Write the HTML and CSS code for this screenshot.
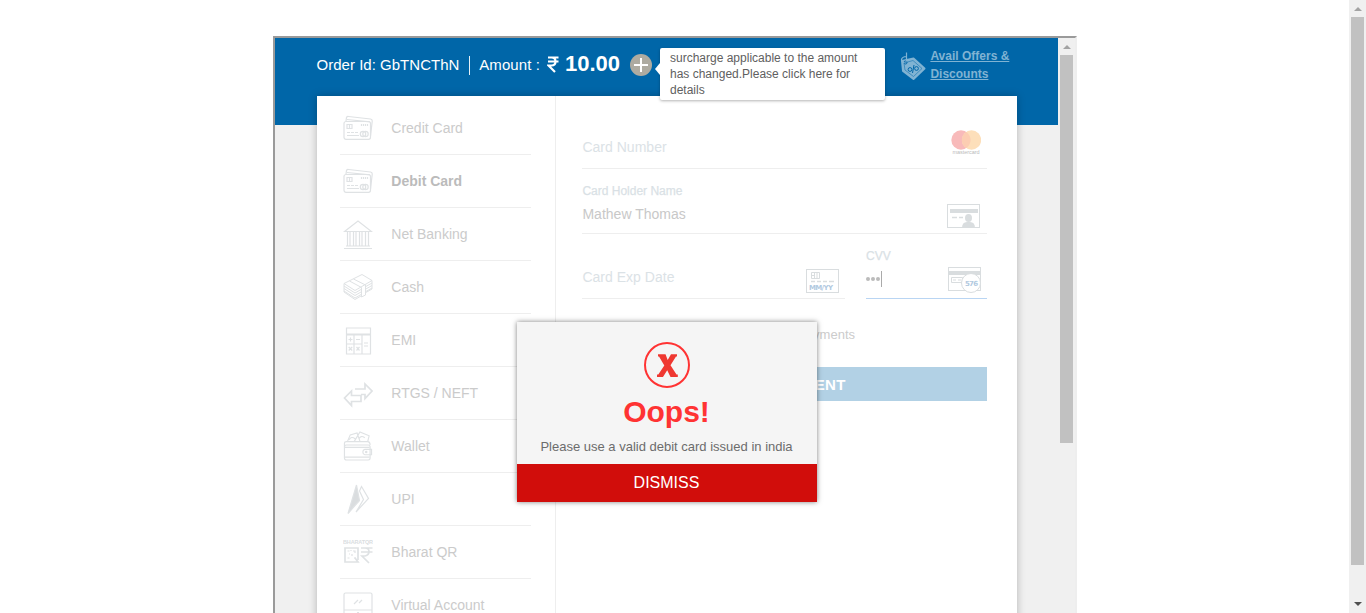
FILE: index.html
```
<!DOCTYPE html>
<html lang="en">
<head>
<meta charset="utf-8">
<title>Payment</title>
<link rel="stylesheet" href="styles.css">
</head>
<body>
<svg class="defs" width="0" height="0">
  <symbol id="cards" viewBox="0 0 30 26">
    <path d="M3 6 L3.500 2.500Q4 1.300 5.500 1.500L27.500 4 Q29.500 4.400 29.200 6.500L27.500 21M4 4.500l23 2.300"/>
    <rect x="1" y="6.500" width="26.500" height="17.800" rx="2"/>
    <path d="M4 9.500h5v4H4zM6.500 10v3M18.500 9v2M20.500 9v2M22.500 9v2M24.500 9v2M4 17.500h3M8 17.500h3M12 17.500h3M4 20.500h12"/>
    <circle cx="20" cy="19" r="2.700"/><circle cx="22.500" cy="19" r="2.700"/>
  </symbol>
</svg>
<div class="page">
  <main class="frame">
    <div class="viewport">
      <header class="topbar">
        <span class="order">Order Id: GbTNCThN</span>
        <span class="amount-label">Amount :</span>
        <strong class="amount"><svg class="rupee" viewBox="0 0 12 17"><path d="M1 1.500h10.500M1 5.500h10.500M1 1.500h3.500q4 0 4 4t-4 4H1.500L8 16"/></svg>10.00</strong>
        <svg class="plus" viewBox="0 0 22 22"><circle cx="11" cy="11" r="11"/><path d="M11 4v14M4 11h14"/></svg>
        <div class="tip">surcharge applicable to the amount has changed.Please click here for details</div>
        <svg class="tag" viewBox="0 0 26 30"><path class="tag-body" d="M2.500 10L14 7.500L25 17.500L14 28L3.500 20Z"/><path class="mark faint" d="M4.500 12L13.500 9.500L22.500 17.500L14 25.500L5.500 19Z"/><circle class="hole" cx="6" cy="11.500" r="1.500"/><path d="M5 12c-4.500-2-4-6 2-6.500M7 1.500v9"/><path class="mark" d="M14.500 14l-1.500 8"/><circle class="mark" cx="10.500" cy="18.500" r="1.900"/><circle class="mark" cx="17" cy="17.500" r="1.900"/></svg>
        <a class="offers">Avail Offers &amp;<br>Discounts</a>
      </header>
      <section class="card">
        <nav class="methods">
          <div class="method"><svg viewBox="0 0 30 26"><use href="#cards"/></svg>Credit Card</div>
          <div class="method active"><svg viewBox="0 0 30 26"><use href="#cards"/></svg>Debit Card</div>
          <div class="method"><svg viewBox="0 0 30 30"><path d="M1.500 12.500L15 2L28.500 12.500Z M4.500 13v14M7 13v14M10.500 13v14M13 13v14M16.500 13v14M19 13v14M22.500 13v14M25.500 13v14M3 27h24M1 29.600h28"/></svg>Net Banking</div>
          <div class="method"><svg class="fine" viewBox="0 0 30 28"><path d="M1 10.500L19 1.500L29 7.500L12 17.500Z M1 13l11 7L18 16.500M1 15.500l11 7 6-3.500M1 18l11 7 6-3.500M1 10.500V19l11 7.500 6-3.500M6.500 8l12 6.500v9.500l4-2V12L10.500 6M22 14l7-4M22 16.500l7-4M22 19l7-4M29 7.500V16l-7 4"/></svg>Cash</div>
          <div class="method"><svg viewBox="0 0 30 30"><path d="M3.500 3h24v6h-24zM3.500 10h7.500v9H3.500zM11 10h8v9h-8zM3.500 19h7.500v10H3.500zM11 19h8v10h-8zM19 10h8.500v19H19zM5.500 14.500h4M7.500 12.500v4M13 14.500h4M5.700 22l3.500 3.500M9.200 22l-3.500 3.500M13.500 22l3 3.500M16.500 22l-3 3.500M21 18h4M21 21h4"/></svg>EMI</div>
          <div class="method"><svg class="bold" viewBox="0 0 30 26"><path d="M12 9h10V4L29 11l-7 7.500v-4h-4M18 15v6.500H8.500v4L1.500 18L8.500 11v4.500h10"/></svg>RTGS / NEFT</div>
          <div class="method"><svg viewBox="0 0 30 31"><rect x="1" y="14.500" width="26.500" height="15.500" rx="2"/><path d="M1 16.500V12.500q0-1.500 2-1.500h22q2.500 0 2.500 3.500M4 11l3-7 7-2 3 8.500M11 11L17 1l9.500 4-1.500 6M16 8q2-4 6-1M6 9q2-4 6-1M1 27h26M1 17h26M22 19h7v5.500h-7q-2-.5-2-2.800t2-2.700Z"/><circle cx="23.500" cy="21.700" r=".7"/></svg>Wallet</div>
          <div class="method"><svg viewBox="0 0 30 30"><path class="fill" d="M13.500 1L16.500 16.500L5 29.500Z"/><path d="M16.500 7L18.500 2.500L25.500 14.500L13 28L20.500 15.500Z"/></svg>UPI</div>
          <div class="method"><svg viewBox="0 0 30 26"><text class="qr-name" x="0" y="5" textLength="30">BHARATQR</text><path class="thick" d="M15 21V9H2v14h13l-3-4"/><path d="M4.500 12h2M10 12h2v2M4.500 19h2M9 15v2M6 15h1M12 18v2M8 11v1"/><path class="thick" d="M18 9h11.500M18 13h11.500M19 9h3q4 0 4 3.500T22 17h-3l7 7"/></svg>Bharat QR</div>
          <div class="method"><svg viewBox="0 0 30 26"><rect x="1" y="1" width="28" height="23" rx="1.500"/><path d="M1 18h28M11 12l4-4M16 11l3-3M14 20.500h2"/></svg>Virtual Account</div>
        </nav>
        <form class="details">
          <div class="field number"><span>Card Number</span>
            <svg class="mc" viewBox="0 0 30 26"><circle cx="10" cy="10" r="9.700" fill="#f8baba"/><circle cx="20.500" cy="10" r="9.700" fill="#fddfba"/><path d="M15.250 1.900a9.700 9.700 0 0 1 0 16.200a9.700 9.700 0 0 1 0-16.200" fill="#fccdb2"/><text x="1.500" y="24.300" textLength="27">mastercard</text></svg>
          </div>
          <div class="field holder"><label>Card Holder Name</label><span class="value">Mathew Thomas</span>
            <svg class="ico" viewBox="0 0 34 25"><rect x=".5" y=".5" width="32" height="23"/><path class="fill" d="M3 5h28v4H3zM15 24q0-6 5-6h3q5 0 5 6z"/><ellipse class="fill" cx="21.500" cy="14" rx="3.500" ry="4"/><path d="M5 13.500h5M12 13.500h4"/></svg>
          </div>
          <div class="pair">
            <div class="field expiry"><span>Card Exp Date</span>
              <svg class="ico" viewBox="0 0 34 25"><rect x=".5" y="1.500" width="32" height="23"/><path class="thin" d="M5.500 4.500h8v6h-8zM8.500 4.500v6M5.500 7.500h3M11 4.500v6"/><path d="M5 13.500h4M11 13.500h4M17 13.500h4M23 13.500h5"/><text x="3" y="22" textLength="24">MM/YY</text></svg>
            </div>
            <div class="field cvv"><label>CVV</label><span class="dots"><i></i><i></i><i></i></span>
              <svg class="ico" viewBox="0 0 35 27"><rect x="1.500" y=".5" width="32" height="23"/><path class="fill" d="M1 4h33v4H1z"/><path class="thin" d="M4.500 10.500h11v5h-11zM6 13h3M11 13h3"/><circle cx="24" cy="16" r="9.500"/><text x="18" y="19" textLength="13">576</text></svg>
            </div>
          </div>
          <p class="save">Securely save this card for future payments</p>
          <div class="pay">MAKE PAYMENT</div>
        </form>
      </section>
      <div class="dialog">
        <svg class="error" viewBox="0 0 46 46"><circle cx="23" cy="23" r="22"/><path d="M14 12.300h7.500l2.200 5.700 3.300-5.700h6v2.200h-1L26.500 23.200l6 9.300h1.300v2.500h-7.300l-3.300-6.800-4.200 6.800H13v-2.500h1.300l6-9-5.300-9h-1z"/></svg>
        <h1>Oops!</h1>
        <p>Please use a valid debit card issued in india</p>
        <div class="dismiss">DISMISS</div>
      </div>
    </div>
    <div class="bar inner"><i class="up"></i><i class="thumb"></i></div>
  </main>
  <div class="bar outer"><i class="up"></i><i class="thumb"></i><i class="down"></i></div>
</div>
</body>
</html>
```
FILE: styles.css
```
* { box-sizing: border-box; }
body { margin: 0; background: #fff; font-family: "Liberation Sans", Arial, sans-serif; overflow: hidden; }
svg { display: block; flex: none; fill: none; stroke-width: 1; }
.defs { position: absolute; }
.page { display: flex; justify-content: flex-end; height: 613px; overflow: hidden; }
.frame { display: flex; width: 804px; height: 577px; margin: 36px 272px 0 0; border: 2px solid #9a9a9a; border-right-color: #eee; border-bottom: 0; }
.viewport { position: relative; width: 783px; height: 575px; background: #f0f0f0; overflow: hidden; }
.topbar { display: flex; align-items: flex-start; height: 87px; padding-left: 41px; background: #0066a8; color: #fff; white-space: nowrap; }
.order { width: 154px; height: 19px; margin-top: 18px; padding-left: .5px; border-right: 1px solid #e5f0f6; font-size: 15px; line-height: 18px; letter-spacing: .02px; }
.amount-label { width: 68px; margin: 18px 0 0 9px; padding-left: .3px; font-size: 15px; line-height: 18px; letter-spacing: .07px; }
.amount { display: flex; width: 83px; margin-top: 13px; font-size: 22px; line-height: 26px; }
.rupee { width: 12px; height: 17px; margin: 5px 6px 0 0; stroke: #fff; stroke-width: 2.2; }
.plus { width: 22px; height: 22px; margin-top: 16px; fill: #aeaba1; stroke: none; }
.plus path { stroke: #fff; stroke-width: 2; }
.tip { position: relative; z-index: 2; width: 225px; height: 52px; margin: 10px 0 0 8px; padding: 2px 10px; border-radius: 2px; background: #fff; box-shadow: 0 1px 3px rgba(0,0,0,.3); color: #606060; font-size: 12px; line-height: 16px; white-space: normal; }
.tip::before { content: ""; position: absolute; left: -5px; top: 15px; border: 6px solid transparent; border-right: 5px solid #fff; border-left: 0; }
.tag { width: 27px; height: 30px; margin: 13px 0 0 14px; stroke: #80b3d3; stroke-width: 1.2; }
.tag-body { fill: #80b3d3; stroke-linejoin: round; stroke-width: 2; }
.tag .mark, .tag .hole { stroke: #0066a8; stroke-width: 1; }
.tag .faint { stroke-width: .5; }
.offers { margin: 9px 0 0 4.4px; color: #80b3d3; font-size: 12px; line-height: 18px; font-weight: bold; text-decoration: underline; }
.card { display: flex; width: 700px; height: 530px; margin: -29px 0 0 42px; background: #fff; box-shadow: 0 0 8px rgba(0,0,0,.25); }
.methods { width: 239px; padding: 6px 24px 0 23px; border-right: 1px solid #eee; }
.method { display: flex; align-items: center; height: 53px; padding-left: 3px; border-bottom: 1px solid #eee; color: #cbcbcb; font-size: 14px; }
.method svg { width: 30px; height: 30px; margin-right: 18.3px; stroke: #dfe2e4; stroke-width: 1.2; }
.method .fine { stroke-width: 1; }
.method .bold { stroke-width: 1.7; }
.method .fill { fill: #dadddf; }
.method .thick { stroke-width: 1.7; }
.active { color: #bbb; font-weight: bold; letter-spacing: 0; }
.qr-name { fill: #dadddf; stroke: none; font-size: 5.5px; font-weight: bold; }
.details { width: 405px; margin: 0 0 0 26px; }
.field { position: relative; display: flex; justify-content: space-between; align-items: flex-start; border-bottom: 1px solid #eee; color: #dbe2e6; font-size: 14px; line-height: 16px; letter-spacing: .02px; }
.field > span:not(.dots) { padding-left: .4px; }
.number { height: 73px; }
.number > span { margin-top: 43px; }
.mc { width: 30px; height: 26px; margin: 34px 6px 0 0; }
.mc text { fill: #bbb; font-size: 5.5px; letter-spacing: 0; }
.holder { height: 65px; display: grid; grid-template: 14px 1fr / 1fr 40px; padding-top: 15px; }
label { grid-column: 1 / 3; padding-left: .4px; font-size: 12px; line-height: 14px; letter-spacing: 0; color: #d8dfe4; -webkit-text-stroke: .25px #dce3e8; }
.cvv label { padding-left: 0; }
.value { margin-top: 8px; color: #c8c8c8; }
.ico { width: 34px; height: 25px; stroke: #d9dddf; stroke-width: 1.3; }
.ico rect { stroke-width: 1; }
.ico .fill { fill: #d9dddf; stroke: none; }
.ico .thin { stroke-width: 1; }
.ico text { fill: #b1c9df; stroke: none; font: bold 7px "DejaVu Sans", sans-serif; letter-spacing: 0; }
.holder .ico { margin: 6px 0 0; }
.pair { display: flex; justify-content: space-between; }
.expiry { width: 263px; height: 65px; }
.expiry span { margin-top: 35px; }
.expiry .ico { margin: 34px 5px 0 0; }
.cvv { display: grid; grid-template: 14px 1fr / 1fr 39px; width: 121px; height: 65px; padding-top: 15px; border-color: #b9d5f3; }
.cvv .ico { width: 35px; height: 27px; margin: 4px 0 0 -1px; }
.cvv .ico circle { fill: #fff; stroke-width: 1; }
.dots { display: flex; gap: 1px; align-items: center; width: 16px; height: 16px; margin-top: 8px; border-right: 1px solid #aaa; }
.dots i { width: 4px; height: 4px; border-radius: 50%; background: #bbb; }
.save { margin: 28px 0 0; padding-right: 132px; color: #ccc; font-size: 13px; line-height: 16px; text-align: right; white-space: nowrap; }
.pay { height: 34px; margin-top: 24px; background: #b2d1e5; color: #fff; font-size: 15px; line-height: 35px; font-weight: bold; text-align: center; letter-spacing: .25px; }
.dialog { position: absolute; left: 242px; top: 284px; display: flex; flex-direction: column; align-items: center; width: 300px; height: 180px; background: #f5f5f5; box-shadow: 0 0 5px rgba(0,0,0,.5); }
.error { width: 46px; height: 46px; margin-top: 20px; fill: #ef3831; }
.error circle { fill: none; stroke: #f33; stroke-width: 2; }
.dialog h1 { margin: 7px 1px 0 0; color: #f33; font-size: 30px; line-height: 34px; }
.dialog p { margin: 10px 1px 0 0; color: #6c6c6c; font-size: 13px; line-height: 16px; }
.dismiss { width: 300px; height: 38px; margin-top: auto; padding-right: 1px; background: #d10d0b; color: #fff; font-size: 16px; line-height: 37px; text-align: center; }
.bar { display: flex; flex-direction: column; align-items: center; width: 17px; background: #f0f0f0; }
.inner { height: 575px; }
.outer { height: 613px; }
.up { margin-top: 7px; border: 4px solid transparent; border-top: 0; border-bottom-color: #a3a3a3; }
.thumb { width: 13px; background: #c1c1c1; }
.inner .thumb { height: 388px; margin-top: 6px; }
.outer .thumb { height: 548px; margin-top: 6px; }
.down { margin-top: 37px; border: 4px solid transparent; border-bottom: 0; border-top-color: #505050; }
```
